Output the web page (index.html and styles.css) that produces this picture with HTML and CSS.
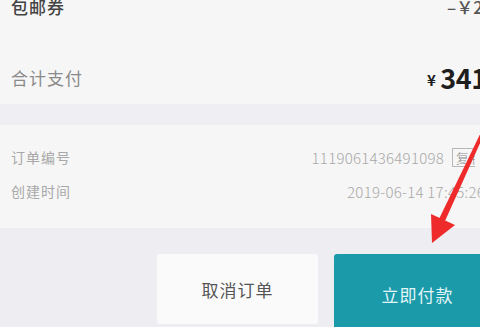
FILE: index.html
```html
<!DOCTYPE html>
<html lang="zh-CN">
<head>
<meta charset="utf-8">
<link rel="stylesheet" href="styles.css">
</head>
<body>
<div class="page">
  <section class="summary">
    <div class="row row-coupon">
      <span class="label-dark">包邮券</span>
      <span class="coupon-value">&ndash;&#xFFE5;20.00</span>
    </div>
    <div class="row row-total">
      <span class="label-mid">合计支付</span>
      <span class="total-value"><span class="yen">&yen;</span>341.00</span>
    </div>
  </section>
  <div class="divider"></div>
  <section class="order">
    <div class="orow">
      <span class="olabel">订单编号</span>
      <span class="ovalue">1119061436491098<span class="copy">复制</span></span>
    </div>
    <div class="orow">
      <span class="olabel">创建时间</span>
      <span class="ovalue date">2019-06-14 17:45:26</span>
    </div>
  </section>
  <footer class="bar">
    <button class="btn btn-cancel">取消订单</button>
    <button class="btn btn-pay">立即付款</button>
  </footer>
  <svg class="arrow" width="480" height="327" viewBox="0 0 480 327">
    <polygon fill="#ee2a2a" points="482,130 485,132 445,221 439,219"/>
    <polygon fill="#ee2a2a" points="432,243 431,214 455,225"/>
  </svg>
</div>
</body>
</html>
```

FILE: styles.css
```css
* { box-sizing: border-box; }
html, body {
  margin: 0;
  padding: 0;
  width: 480px;
  height: 327px;
  overflow: hidden;
  background: #f6f6f6;
  font-family: "Noto Sans CJK SC", "Noto Sans", sans-serif;
}
.page {
  position: relative;
  width: 480px;
  height: 327px;
  overflow: hidden;
  display: flex;
  flex-direction: column;
}
.summary {
  margin-top: -20px;
  padding: 0 0 1px 11px;
  background: #f6f6f6;
}
.row {
  display: flex;
  align-items: center;
  height: 52px;
  white-space: nowrap;
}
.row-total { margin-top: 19px; }
.label-dark {
  flex: 1;
  font-size: 17px;
  color: #444;
  font-weight: 500;
  letter-spacing: 1px;
}
.label-mid {
  flex: 1;
  font-size: 17px;
  color: #8a8a8a;
  letter-spacing: 1px;
}
.coupon-value {
  width: 33px;
  font-size: 17px;
  color: #555;
  font-weight: 500;
}
.total-value {
  width: 53px;
  font-size: 27px;
  font-weight: 700;
  color: #1e1e1e;
  letter-spacing: -0.5px;
}
.yen {
  font-size: 15px;
  margin-right: 5px;
  vertical-align: 3px;
}
.divider {
  height: 21px;
  background: #efeef3;
  flex: none;
}
.order {
  padding: 15px 0 20px 11px;
  background: #f6f6f6;
}
.orow {
  display: flex;
  align-items: center;
  height: 34px;
  white-space: nowrap;
}
.olabel {
  flex: 1;
  font-size: 14px;
  color: #a8a8a8;
  letter-spacing: 1px;
}
.ovalue {
  display: flex;
  align-items: center;
  font-size: 15px;
  color: #a9a9a9;
  font-weight: 300;
  letter-spacing: 0.25px;
  margin-right: 5px;
}
.ovalue.date { margin-right: -5px; }
.copy {
  display: inline-block;
  width: 23px;
  height: 19px;
  margin-left: 8px;
  border: 1px solid #b8b8b8;
  border-right: none;
  font-size: 13px;
  line-height: 17px;
  padding-left: 3px;
  overflow: hidden;
  color: #888;
}
.bar {
  flex: 1;
  background: #eeedf1;
  display: flex;
  gap: 16px;
  padding: 26px 0 0 157px;
}
.btn {
  flex: none;
  width: 161px;
  height: 70px;
  border: none;
  border-radius: 3px;
  font-family: "Noto Sans CJK SC", "Noto Sans", sans-serif;
  font-size: 17px;
  letter-spacing: 1px;
}
.btn-cancel {
  background: #fafafa;
  color: #555;
}
.btn-pay {
  width: 170px;
  height: 80px;
  background: #1b9aaa;
  color: #e2f6f8;
  padding-right: 9px;
}
.arrow {
  position: absolute;
  left: 0;
  top: 0;
}
```
